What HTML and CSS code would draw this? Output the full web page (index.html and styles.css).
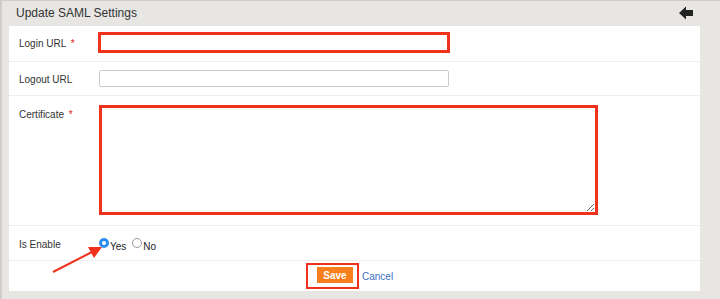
FILE: index.html
```html
<!DOCTYPE html>
<html lang="en">
<head>
    <meta charset="UTF-8">
    <meta name="viewport" content="width=device-width, initial-scale=1.0">
    <title>Update SAML Settings</title>
    <link rel="stylesheet" href="styles.css">
</head>
<body>

<div class="frame">
    <div class="header">
        <span class="title">Update SAML Settings</span>
        <svg class="back" width="14" height="14" viewBox="0 0 14 14"><path d="M0 7 L7 0.5 L7 4 L14 4 L14 10 L7 10 L7 13.5 Z" fill="#222"/></svg>
    </div>
    <div class="panel">
        <div class="row row-login">
            <label>Login URL <span class="req">*</span></label>
            <input type="text" class="field marked">
        </div>
        <div class="row row-logout">
            <label>Logout URL</label>
            <input type="text" class="field">
        </div>
        <div class="row row-cert">
            <label>Certificate <span class="req">*</span></label>
            <textarea class="cert marked"></textarea>
        </div>
        <div class="row row-enable">
            <label>Is Enable</label>
            <div class="radios">
                <span class="radio on"></span><span class="opt">Yes</span>
                <span class="radio"></span><span class="opt">No</span>
            </div>
        </div>
        <div class="actions">
            <span class="save-box"><button class="save">Save</button></span>
            <a href="#" class="cancel">Cancel</a>
        </div>
        <svg class="pointer" width="60" height="32" viewBox="0 0 60 32">
            <line x1="1" y1="30" x2="40" y2="10" stroke="#f0321c" stroke-width="2"/>
            <path d="M50 5 L36 5 L42 16 Z" fill="#f0321c"/>
        </svg>
    </div>
</div>

</body>
</html>
```

FILE: styles.css
```css
body { margin: 0; font-family: "Liberation Sans", Arial, sans-serif; background: #e7e6e3; }
.frame { height: 298px; border-top: 1px solid #cfcecb; border-left: 2px solid #cfcecb; background: #e7e6e3; }
.header { height: 25px; display: flex; align-items: center; justify-content: space-between; padding: 0 27px 0 14px; }
.title { font-size: 12px; color: #333; margin-top: -2px; }
.back { margin-top: -2px; }
.panel { position: relative; background: #fff; margin: 0 20px 0 7px; height: 265px; }
.row { display: flex; align-items: flex-start; border-bottom: 1px solid #eeeeee; padding-left: 10px; box-sizing: border-box; }
.row label { width: 79px; flex: none; font-size: 10px; color: #333; }
.req { color: #e02020; font-size: 10px; margin-left: 2px; }
.row-login { height: 36px; padding-top: 6px; }
.row-login label { padding-top: 6px; }
.row-logout { height: 34px; padding-top: 8px; }
.row-logout label { padding-top: 4px; }
.row-cert { height: 130px; padding-top: 9px; }
.row-cert label { padding-top: 4px; }
.row-enable { height: 35px; padding-top: 11px; }
.row-enable label { padding-top: 2px; }
.field { box-sizing: border-box; width: 350px; height: 17px; border: 1px solid #cccccc; border-radius: 2px; margin: 0 0 0 1px; padding: 0; }
.field.marked { width: 352px; height: 21px; margin-left: 0; border: 3px solid #f0321c; border-radius: 0; }
.cert { box-sizing: border-box; width: 499px; height: 110px; margin: 0 0 0 1px; padding: 0; resize: both; }
.marked { border: 3px solid #f0321c; outline: none; }
.radios { display: flex; align-items: center; font-size: 10px; color: #222; margin-left: 1px; }
.radio { width: 10px; height: 10px; border: 1px solid #999; border-radius: 50%; box-sizing: border-box; background: #fff; margin-top: -3px; }
.radio.on { border: 3px solid #2c8ff0; background: #fff; }
.opt { margin: 4px 6px 0 1px; }
.actions { display: flex; align-items: center; height: 30px; padding-left: 297px; gap: 3px; }
.save-box { border: 2px solid #f0321c; padding: 2px 4px 4px 9px; display: inline-flex; }
.save { background: #f77f1c; color: #fff; border: 0; font-family: "Liberation Sans", Arial, sans-serif; font-weight: bold; font-size: 10px; width: 36px; height: 16px; padding: 0; }
.cancel { color: #3b6fc4; font-size: 10px; text-decoration: none; margin-top: 1px; }
.pointer { position: absolute; left: 43px; top: 216px; }
```
